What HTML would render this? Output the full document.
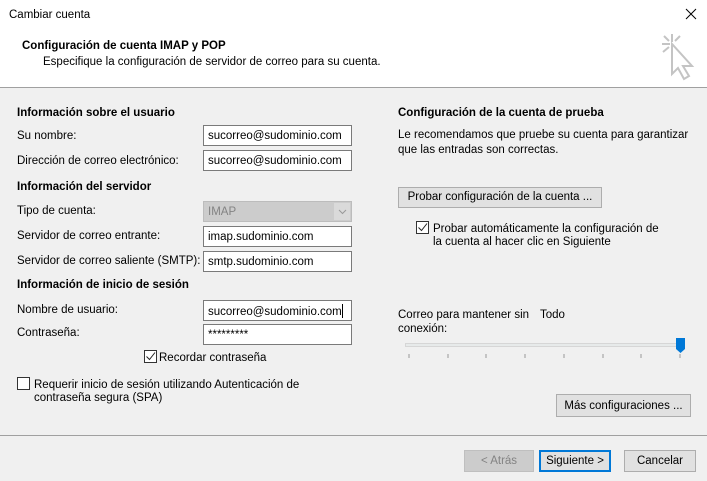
<!DOCTYPE html>
<html><head><meta charset="utf-8"><style>
*{margin:0;padding:0;box-sizing:border-box}
body{width:707px;height:481px;background:#f0f0f0;font-family:"Liberation Sans","DejaVu Sans",sans-serif;font-size:11.5px;color:#000;position:relative;overflow:hidden}
.a{position:absolute;white-space:nowrap;line-height:14px}
.b{font-weight:bold}
.in{position:absolute;left:203px;width:149px;height:21px;background:#fff;border:1px solid #7a7a7a;padding:3px 0 0 4px;font-size:11.5px;line-height:14px}
.btn{position:absolute;background:#e1e1e1;border:1px solid #adadad;text-align:center}
.cb{position:absolute;width:13px;height:13px;border:1px solid #333;background:#fff}
</style></head><body>
<div style="position:absolute;left:0;top:0;width:707px;height:88px;background:#fff;border-bottom:1px solid #a0a0a0"></div>
<div class="a" style="left:9px;top:8px">Cambiar cuenta</div>
<svg style="position:absolute;left:684px;top:7px" width="14" height="14"><path d="M2 2L12 12M12 2L2 12" stroke="#000" stroke-width="1"/></svg>
<svg style="position:absolute;left:658px;top:32px" width="40" height="52"><g stroke="#c4c4c4" stroke-width="2" fill="none"><path d="M14 2v8M4 12h8M6 4l5 5M22 4l-5 5M5 20l6-5"/><path d="M14 12v30l6-6 6 11 5-3-6-10h9z" fill="#fff"/></g></svg>
<div class="a b" style="left:22px;top:39px">Configuración de cuenta IMAP y POP</div>
<div class="a" style="left:43px;top:55px">Especifique la configuración de servidor de correo para su cuenta.</div>

<div class="a b" style="left:17px;top:106px">Información sobre el usuario</div>
<div class="a" style="left:17px;top:129px">Su nombre:</div>
<div class="a" style="left:17px;top:154px">Dirección de correo electrónico:</div>
<div class="a b" style="left:17px;top:180px">Información del servidor</div>
<div class="a" style="left:17px;top:204px">Tipo de cuenta:</div>
<div class="a" style="left:17px;top:229px">Servidor de correo entrante:</div>
<div class="a" style="left:17px;top:254px">Servidor de correo saliente (SMTP):</div>
<div class="a b" style="left:17px;top:278px">Información de inicio de sesión</div>
<div class="a" style="left:17px;top:303px">Nombre de usuario:</div>
<div class="a" style="left:17px;top:326px">Contraseña:</div>

<div class="in" style="top:125px">sucorreo@sudominio.com</div>
<div class="in" style="top:150px">sucorreo@sudominio.com</div>
<div class="in" style="top:201px;background:#ccc;border-color:#bcbcbc;color:#838383">IMAP<div style="position:absolute;right:1px;top:1px;width:17px;height:17px;background:#dadada;border-left:1px solid #ccc"><svg width="17" height="17"><path d="M5 7l3.5 3.5L12 7" stroke="#999" fill="none"/></svg></div></div>
<div class="in" style="top:226px">imap.sudominio.com</div>
<div class="in" style="top:251px">smtp.sudominio.com</div>
<div class="in" style="top:300px">sucorreo@sudominio.com<span style="display:inline-block;width:1px;height:14px;background:#000;vertical-align:-3px"></span></div>
<div class="in" style="top:324px">*********</div>

<div class="cb" style="left:144px;top:350px"><svg width="11" height="11"><path d="M1.5 5.5l3 3 5.5-7" stroke="#222" fill="none"/></svg></div>
<div class="a" style="left:159px;top:351px">Recordar contraseña</div>
<div class="cb" style="left:17px;top:377px"></div>
<div class="a" style="left:34px;top:378px">Requerir inicio de sesión utilizando Autenticación de</div>
<div class="a" style="left:34px;top:391px">contraseña segura (SPA)</div>

<div class="a b" style="left:398px;top:106px">Configuración de la cuenta de prueba</div>
<div class="a" style="left:398px;top:128px">Le recomendamos que pruebe su cuenta para garantizar</div>
<div class="a" style="left:398px;top:143px">que las entradas son correctas.</div>
<div class="btn" style="left:398px;top:187px;width:204px;height:21px;line-height:19px">Probar configuración de la cuenta ...</div>
<div class="cb" style="left:416px;top:221px"><svg width="11" height="11"><path d="M1.5 5.5l3 3 5.5-7" stroke="#222" fill="none"/></svg></div>
<div class="a" style="left:433px;top:222px">Probar automáticamente la configuración de</div>
<div class="a" style="left:433px;top:235px">la cuenta al hacer clic en Siguiente</div>
<div class="a" style="left:398px;top:308px">Correo para mantener sin</div>
<div class="a" style="left:398px;top:322px">conexión:</div>
<div class="a" style="left:540px;top:308px">Todo</div>
<div style="position:absolute;left:405px;top:343px;width:278px;height:4px;background:#e7eaea;border:1px solid #d6d6d6"></div>
<svg style="position:absolute;left:400px;top:337px" width="300" height="24">
<path d="M276 1h9v11l-4.5 4-4.5-4z" fill="#0078d7"/>
<g stroke="#999"><path d="M9 17v4M48 17v4M86 17v4M125 17v4M164 17v4M203 17v4M241 17v4M280 17v4"/></g></svg>
<div class="btn" style="left:556px;top:394px;width:135px;height:23px;line-height:22px">Más configuraciones ...</div>

<div style="position:absolute;left:0;top:435px;width:707px;height:1px;background:#a0a0a0"></div>
<div class="btn" style="left:464px;top:450px;width:70px;height:22px;line-height:21px;color:#838383;background:#ccc;border-color:#bfbfbf">&lt; Atrás</div>
<div class="btn" style="left:539px;top:450px;width:72px;height:22px;border:2px solid #0078d7;line-height:19px">Siguiente &gt;</div>
<div class="btn" style="left:624px;top:450px;width:72px;height:22px;line-height:21px">Cancelar</div>
</body></html>
